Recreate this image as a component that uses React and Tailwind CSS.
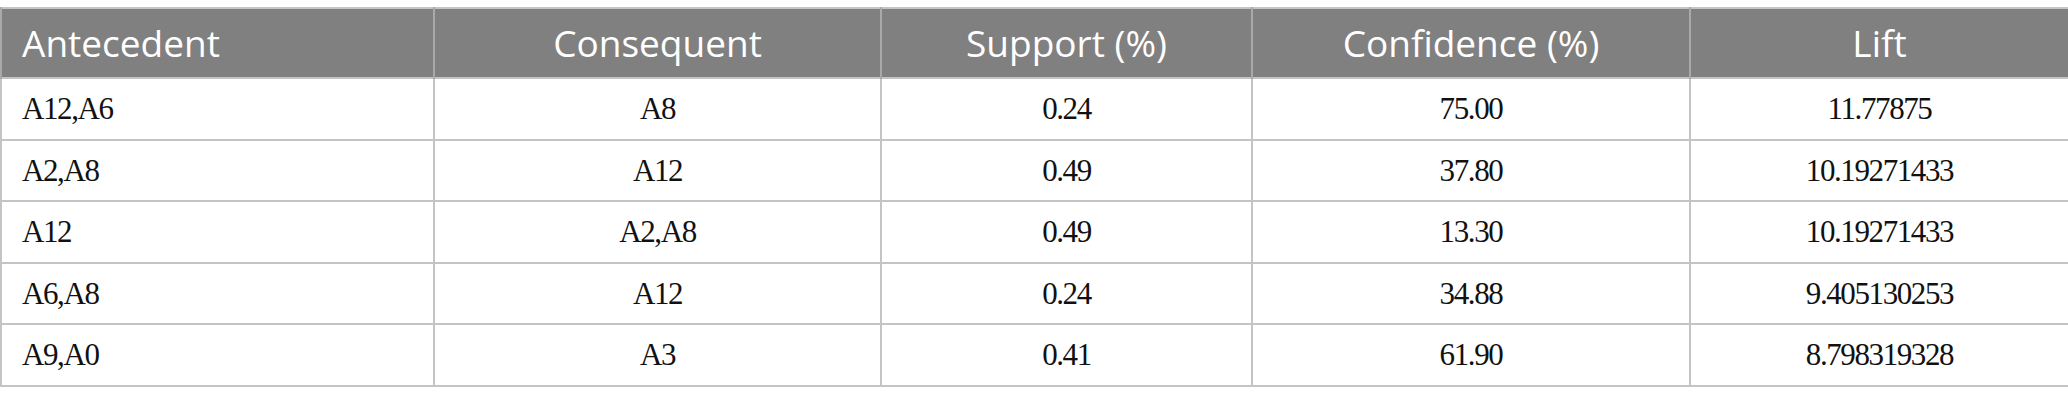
const columns = [
  { label: 'Antecedent', width: 'w-[433px]', align: 'text-left' },
  { label: 'Consequent', width: 'w-[447px]', align: 'text-center' },
  { label: 'Support (%)', width: 'w-[371px]', align: 'text-center' },
  { label: 'Confidence (%)', width: 'w-[438px]', align: 'text-center' },
  { label: 'Lift', width: 'w-[379px]', align: 'text-center' },
]

const rows = [
  ['A12,A6', 'A8', '0.24', '75.00', '11.77875'],
  ['A2,A8', 'A12', '0.49', '37.80', '10.19271433'],
  ['A12', 'A2,A8', '0.49', '13.30', '10.19271433'],
  ['A6,A8', 'A12', '0.24', '34.88', '9.405130253'],
  ['A9,A0', 'A3', '0.41', '61.90', '8.798319328'],
]

export default function App() {
  return (
    <div className="w-[2068px] h-[402px] bg-white pt-[7px]">
      <table className="w-[2068px] table-fixed border-collapse border-2 border-[#c4c4c4]">
        <colgroup>
          {columns.map((c) => (
            <col key={c.label} className={c.width} />
          ))}
        </colgroup>
        <thead>
          <tr className="h-[70px] bg-[#7f807f]">
            {columns.map((c) => (
              <th
                key={c.label}
                className={`${c.align} font-normal text-white text-[37px] leading-none px-5 pb-[2px] border-x-2 border-[#a9a9a9] font-['Open_Sans','Noto_Sans',sans-serif]`}
              >
                {c.label}
              </th>
            ))}
          </tr>
        </thead>
        <tbody>
          {rows.map((row, i) => (
            <tr key={i} className="h-[61.5px]">
              {row.map((cell, j) => (
                <td
                  key={j}
                  className={`${columns[j].align} px-5 text-[31px] leading-none tracking-[-1.4px] text-[#111] border-2 border-[#c4c4c4] font-['Liberation_Serif','Times_New_Roman',serif]`}
                >
                  {cell}
                </td>
              ))}
            </tr>
          ))}
        </tbody>
      </table>
    </div>
  )
}
